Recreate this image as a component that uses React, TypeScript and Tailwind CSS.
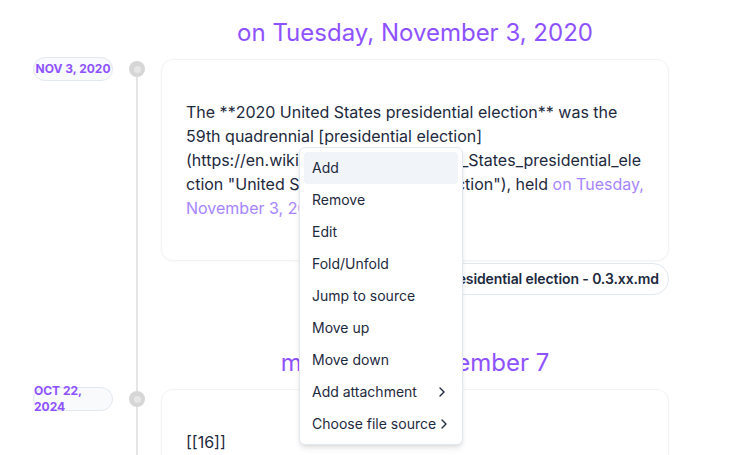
import React from 'react';
import { ChevronRight } from 'lucide-react';

interface EntryProps {
  date: string;
  heading: string;
  first?: boolean;
  children: React.ReactNode;
  footer?: React.ReactNode;
}

const Entry: React.FC<EntryProps> = ({ date, heading, first, children, footer }) => {
  return (
    <div className="flex">
      <div className="w-[80px] shrink-0">
        <div className="mt-[40px] flex h-[24px] w-[80px] items-center justify-center rounded-full border border-slate-200 bg-slate-50">
          <span className="text-left text-xs font-bold uppercase leading-4 text-violet-500">{date}</span>
        </div>
      </div>

      <div className="ml-4 flex w-4 shrink-0 flex-col items-center">
        <div className={`h-[44px] w-[2px] ${first ? '' : 'bg-[#e5e5e5]'}`}></div>
        <div className="flex h-4 w-4 items-center justify-center rounded-full bg-[#d6d6d6]">
          <div className="h-[7px] w-[7px] rounded-full bg-[#e6e6e6]"></div>
        </div>
        <div className="w-[2px] flex-1 bg-[#e5e5e5]"></div>
      </div>

      <div className={`ml-4 w-[508px] shrink-0 ${first ? 'pb-[52px]' : ''}`}>
        <h2 className="mb-[10px] h-8 text-center text-2xl font-normal leading-8 text-violet-500">{heading}</h2>
        <div className="rounded-xl border border-[#f1f3f6] bg-white px-6 py-10 shadow-[0_1px_2px_rgba(0,0,0,0.03)]">
          <p className="break-words text-base leading-6 text-slate-800">{children}</p>
        </div>
        {footer}
      </div>
    </div>
  );
};

const menuItems = [
  { label: 'Add', sub: false },
  { label: 'Remove', sub: false },
  { label: 'Edit', sub: false },
  { label: 'Fold/Unfold', sub: false },
  { label: 'Jump to source', sub: false },
  { label: 'Move up', sub: false },
  { label: 'Move down', sub: false },
  { label: 'Add attachment', sub: true },
  { label: 'Choose file source', sub: true },
];

export default function App() {
  return (
    <div className="relative h-[455px] w-[745px] overflow-hidden bg-white font-['Inter',sans-serif]">
      <div className="flex flex-col pl-[33px] pt-[17px]">
        <Entry
          first
          date="Nov 3, 2020"
          heading="on Tuesday, November 3, 2020"
          footer={
            <div className="mt-[2px] flex justify-end">
              <div className="flex h-8 items-center rounded-full border border-slate-200 bg-white pl-3 pr-[9px] text-sm font-semibold tracking-[-0.1px] text-slate-800">
                2020 United States presidential election - 0.3.xx.md
              </div>
            </div>
          }
        >
          The **2020 United States presidential election** was the 59th quadrennial [presidential election](https://en.wikipedia.org/wiki/United_States_presidential_election "United States presidential election"), held{' '}
          <span className="text-violet-400">on Tuesday, November 3, 2020</span>.
        </Entry>

        <Entry date="Oct 22, 2024" heading="morning of November 7">
          [[16]]
        </Entry>
      </div>

      <div className="absolute left-[299px] top-[147px] w-[164px] rounded-md border border-slate-200 bg-white p-1 shadow-md">
        {menuItems.map((item, i) => (
          <div
            key={item.label}
            className={`flex h-8 items-center rounded-sm px-2 text-sm text-slate-800 ${i === 0 ? 'bg-slate-100' : ''}`}
          >
            <span className="whitespace-nowrap">{item.label}</span>
            {item.sub && <ChevronRight className="ml-auto shrink-0" size={16} strokeWidth={2} />}
          </div>
        ))}
      </div>
    </div>
  );
}
